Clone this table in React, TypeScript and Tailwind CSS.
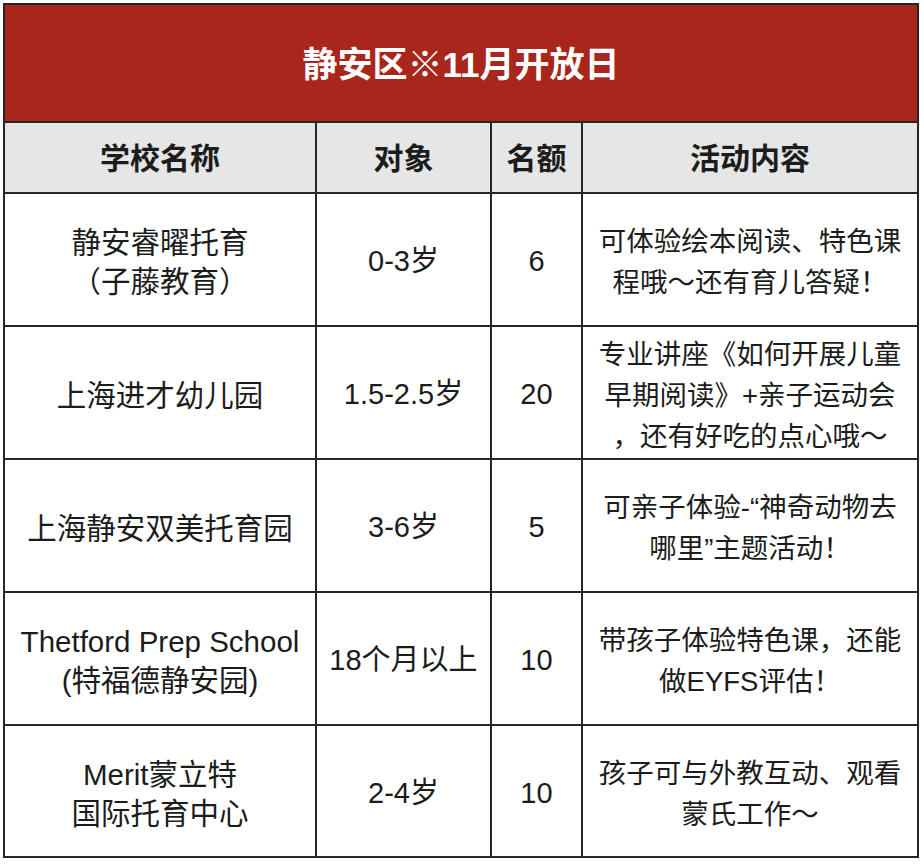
import React from "react";

const rows: { name: string[]; target: string; quota: string; act: string[] }[] = [
  { name: ["静安睿曜托育", "（子藤教育）"], target: "0-3岁", quota: "6", act: ["可体验绘本阅读、特色课", "程哦～还有育儿答疑！"] },
  { name: ["上海进才幼儿园"], target: "1.5-2.5岁", quota: "20", act: ["专业讲座《如何开展儿童", "早期阅读》+亲子运动会", "，还有好吃的点心哦～"] },
  { name: ["上海静安双美托育园"], target: "3-6岁", quota: "5", act: ["可亲子体验-“神奇动物去", "哪里”主题活动！"] },
  { name: ["Thetford Prep School", "(特福德静安园)"], target: "18个月以上", quota: "10", act: ["带孩子体验特色课，还能", "做EYFS评估！"] },
  { name: ["Merit蒙立特", "国际托育中心"], target: "2-4岁", quota: "10", act: ["孩子可与外教互动、观看", "蒙氏工作～"] },
];

const font = { fontFamily: '"Liberation Sans", "Noto Sans CJK SC", sans-serif' };

export default function App() {
  return (
    <div className="w-[924px] h-[865px] bg-white pt-[3px] pl-[3px]" style={font}>
      <div className="w-[916px] bg-[#262626] p-[2px] grid grid-cols-[310px_173px_89px_334px] gap-[2px] text-[#1c1c1c]">
        <div className="col-span-4 h-[116px] bg-[#a8261b] flex items-center justify-center text-white font-bold text-[35px] pt-[4px]">
          静安区※11月开放日
        </div>
        {["学校名称", "对象", "名额", "活动内容"].map((h) => (
          <div key={h} className="h-[69px] bg-[#e6e6e6] flex items-center justify-center font-bold text-[30px] pt-[2px]">
            {h}
          </div>
        ))}
        {rows.map((r, i) => (
          <React.Fragment key={i}>
            <div className={`${i === 4 ? "h-[130px]" : "h-[131px]"} bg-white flex flex-col items-center justify-center text-[29.5px] leading-[39px] text-center pt-[5px]`}>
              {r.name.map((l) => (
                <div key={l}>{l}</div>
              ))}
            </div>
            <div className="bg-white flex items-center justify-center text-[29px] pt-[5px]">{r.target}</div>
            <div className="bg-white flex items-center justify-center text-[29px] pt-[5px]">{r.quota}</div>
            <div className="bg-white flex flex-col items-center justify-center text-[27.5px] leading-[41px] text-center pt-[5px]">
              {r.act.map((l) => (
                <div key={l}>{l}</div>
              ))}
            </div>
          </React.Fragment>
        ))}
      </div>
    </div>
  );
}
